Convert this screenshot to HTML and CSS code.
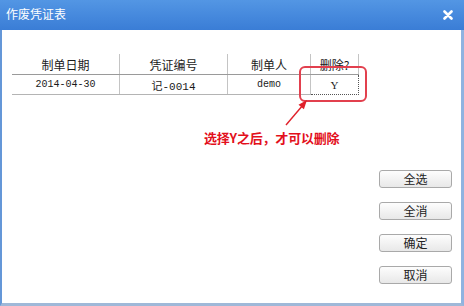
FILE: index.html
```html
<!DOCTYPE html>
<html lang="zh-CN">
<head>
    <meta charset="UTF-8">
    <meta name="viewport" content="width=device-width, initial-scale=1.0">
    <title>作废凭证表</title>
    <link rel="stylesheet" href="styles.css">
</head>
<body>
    <div class="dialog">
        <div class="titlebar">
            <span class="title">作废凭证表</span>
            <svg class="close" width="10" height="10" viewBox="0 0 10 10">
                <path d="M1.5 1.5 L8.5 8.5 M8.5 1.5 L1.5 8.5" stroke="#fff" stroke-width="2.6" stroke-linecap="round"/>
            </svg>
        </div>
        <div class="content">
            <div class="main">
                <table class="grid">
                    <tr>
                        <th class="c1">制单日期</th>
                        <th class="c2">凭证编号</th>
                        <th class="c3">制单人</th>
                        <th class="c4">删除?</th>
                    </tr>
                    <tr>
                        <td class="c1">2014-04-30</td>
                        <td class="c2">记-0014</td>
                        <td class="c3">demo</td>
                        <td class="c4 picked">Y</td>
                    </tr>
                </table>
                <p class="note">选择Y之后，才可以删除</p>

                <!-- annotation drawn over the grid -->
                <div class="highlight"></div>
                <svg class="arrow" width="34" height="34" viewBox="0 0 34 34">
                    <line x1="6" y1="29" x2="23" y2="9" stroke="#e0202a" stroke-width="1.4"/>
                    <polygon points="27,4 23.9,13.2 18.5,8.7" fill="#e0202a"/>
                </svg>
            </div>
            <div class="actions">
                <button class="btn">全选</button>
                <button class="btn">全消</button>
                <button class="btn">确定</button>
                <button class="btn">取消</button>
            </div>
        </div>
    </div>
</body>
</html>
```

FILE: styles.css
```css
body {
    margin: 0;
    padding: 0;
    font-family: "Noto Sans CJK SC", "DejaVu Sans", sans-serif;
    background-color: #fff;
}

.dialog {
    width: 464px;
    height: 306px;
    display: flex;
    flex-direction: column;
}

.titlebar {
    height: 30px;
    flex: none;
    display: flex;
    align-items: center;
    justify-content: space-between;
    padding: 0 11px 0 6px;
    background: linear-gradient(#5396e4, #3a7dd6);
    color: #fff;
}

.title {
    font-size: 12px;
    line-height: 14px;
    margin-top: -2px;
}

.close {
    display: block;
}

.content {
    flex: 1;
    display: flex;
    background-color: #fff;
    border-left: 2px solid #6497d8;
    border-right: 3px solid #8fb3e0;
    border-bottom: 3px solid #9fb8d8;
}

.main {
    flex: 1;
    position: relative;
    padding: 24px 0 0 10px;
}

.grid {
    border-collapse: collapse;
    font-size: 12px;
    color: #1a1a1a;
}

.grid th {
    height: 19px;
    padding: 1px 0 0;
    font-weight: normal;
    line-height: 14px;
    vertical-align: middle;
    border-bottom: 1px solid #9a9a9a;
    border-right: 1px solid #c4c4c4;
}

.grid td {
    height: 19px;
    padding: 0;
    text-align: center;
    font-family: "Liberation Mono", "Noto Sans CJK SC", monospace;
    font-size: 10px;
    border-bottom: 1px solid #b4b4b4;
    border-right: 1px solid #c4c4c4;
}

.c1 { width: 107px; }
.c2 { width: 107px; }
.c3 { width: 82px; }
.c4 { width: 47px; }

.grid td.c2 {
    font-size: 11px;
}

.grid td.picked {
    border: 1px dotted #555;
    font-family: "Liberation Serif", serif;
    font-size: 11px;
}

.note {
    margin: 37px 0 0 192px;
    font-size: 13px;
    line-height: 12px;
    font-weight: bold;
    color: #e3101c;
    letter-spacing: -0.2px;
}

.highlight {
    position: absolute;
    left: 297px;
    top: 36px;
    width: 64px;
    height: 32px;
    border: 2px solid #e2404e;
    border-radius: 6px;
}

.arrow {
    position: absolute;
    left: 278px;
    top: 66px;
}

.actions {
    width: 73px;
    margin-right: 9px;
    padding-top: 140px;
    display: flex;
    flex-direction: column;
    gap: 14px;
}

.btn {
    height: 18px;
    padding: 0;
    font-family: "Noto Sans CJK SC", sans-serif;
    font-size: 12px;
    line-height: 14px;
    color: #222;
    background: linear-gradient(#fdfdfd, #e8e8e8);
    border: 1px solid #a9a9a9;
    border-radius: 3px;
}
```
